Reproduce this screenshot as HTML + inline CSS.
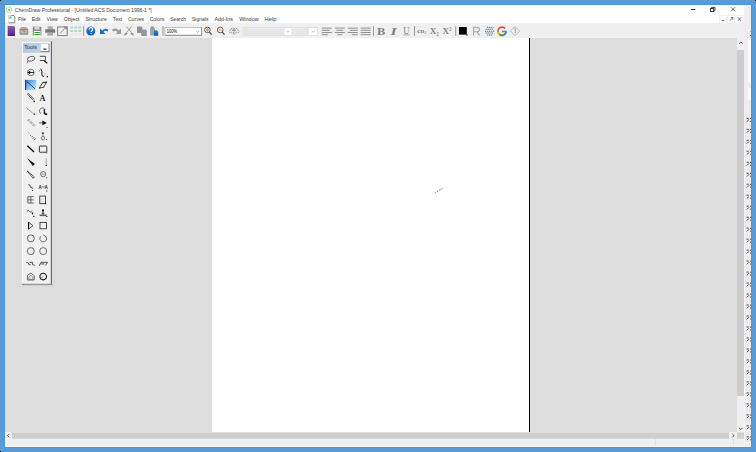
<!DOCTYPE html>
<html><head><meta charset="utf-8">
<style>
*{margin:0;padding:0;box-sizing:border-box}
html,body{width:756px;height:452px;overflow:hidden;background:#5b9bd5;font-family:"Liberation Sans",sans-serif}
.a{position:absolute}
#win{position:absolute;left:5px;top:5px;width:746px;height:442px;background:#f0f0f0;overflow:hidden}
#title{left:0;top:0;width:739px;height:9px;background:#fff}
#menu{left:0;top:9px;width:739px;height:9px;background:#fff}
#tb{left:0;top:18px;width:739px;height:15px;background:#f0f0f0}
#canvas{left:0;top:33px;width:732px;height:394px;background:#dddddd}
#page{left:207px;top:33px;width:317px;height:394px;background:#fff}
#pline{left:524px;top:33px;width:1px;height:394px;background:#000}
#vsb{left:732px;top:33px;width:7px;height:394px;background:#f0f0f0}
#hsb{left:0;top:427px;width:739px;height:7px;background:#f0f0f0}
#status{left:0;top:434px;width:739px;height:8px;background:#f0f0f0}
#rp{left:739px;top:0;width:7px;height:442px;background:#eeeeee}
svg{position:absolute;left:0;top:0}
text{font-family:"Liberation Sans",sans-serif}
</style></head><body>
<div id="win">
  <div id="title" class="a"></div>
  <div id="menu" class="a"></div>
  <div id="tb" class="a"></div>
  <div id="canvas" class="a"></div>
  <div id="page" class="a"></div>
  <div id="pline" class="a"></div>
  <div id="vsb" class="a"></div>
  <div id="hsb" class="a"></div>
  <div id="status" class="a"></div>
  <div id="rp" class="a"></div>
</div>
<svg width="756" height="452" viewBox="0 0 756 452">
<g stroke="#5cb85c" fill="none" stroke-width="0.9"><circle cx="9.1" cy="9.7" r="2.7" stroke-dasharray="1.2 0.6"/></g><circle cx="9.1" cy="9.9" r="1.1" fill="#7cc47c"/>
<text x="14.8" y="12.2" font-size="5.6" fill="#3a3a3a" font-weight="normal" textLength="137" lengthAdjust="spacingAndGlyphs" >ChemDraw Professional - [Untitled ACS Document 1996-1 *]</text>
<rect x="691" y="9" width="4.3" height="0.9" fill="#111"/>
<g fill="none" stroke="#111" stroke-width="0.8"><rect x="710.4" y="8.6" width="3.4" height="3"/><path d="M711.6 8.6V7.4h3.4v3h-1.2"/></g>
<g stroke="#333" stroke-width="0.7"><path d="M731 7.3L735 11.3M735 7.3L731 11.3"/></g>
<path d="M8.2 22.8V15.4h5.2" fill="#fff" stroke="#d0d0d0" stroke-width="0.7"/><path d="M11.4 15.4h2l1.4 1.4v6H8.6" fill="none" stroke="#6a6a6a" stroke-width="0.8"/>
<circle cx="10.2" cy="17.6" r="1.9" fill="#b6e0b0" opacity="0.9"/><circle cx="10.4" cy="17.2" r="0.7" fill="#6cc06c"/>
<text x="18" y="21.1" font-size="5.6" fill="#3a3a3a" font-weight="normal" textLength="8" lengthAdjust="spacingAndGlyphs" >File</text>
<text x="31.8" y="21.1" font-size="5.6" fill="#3a3a3a" font-weight="normal" textLength="8.7" lengthAdjust="spacingAndGlyphs" >Edit</text>
<text x="46.6" y="21.1" font-size="5.6" fill="#3a3a3a" font-weight="normal" textLength="11.3" lengthAdjust="spacingAndGlyphs" >View</text>
<text x="63.8" y="21.1" font-size="5.6" fill="#3a3a3a" font-weight="normal" textLength="15.6" lengthAdjust="spacingAndGlyphs" >Object</text>
<text x="85.6" y="21.1" font-size="5.6" fill="#3a3a3a" font-weight="normal" textLength="21.2" lengthAdjust="spacingAndGlyphs" >Structure</text>
<text x="112.8" y="21.1" font-size="5.6" fill="#3a3a3a" font-weight="normal" textLength="9.5" lengthAdjust="spacingAndGlyphs" >Text</text>
<text x="127.9" y="21.1" font-size="5.6" fill="#3a3a3a" font-weight="normal" textLength="16.2" lengthAdjust="spacingAndGlyphs" >Curves</text>
<text x="149.7" y="21.1" font-size="5.6" fill="#3a3a3a" font-weight="normal" textLength="14.7" lengthAdjust="spacingAndGlyphs" >Colors</text>
<text x="170.2" y="21.1" font-size="5.6" fill="#3a3a3a" font-weight="normal" textLength="15.8" lengthAdjust="spacingAndGlyphs" >Search</text>
<text x="192" y="21.1" font-size="5.6" fill="#3a3a3a" font-weight="normal" textLength="16.5" lengthAdjust="spacingAndGlyphs" >Signals</text>
<text x="214.4" y="21.1" font-size="5.6" fill="#3a3a3a" font-weight="normal" textLength="18.5" lengthAdjust="spacingAndGlyphs" >Add-Ins</text>
<text x="239.2" y="21.1" font-size="5.6" fill="#3a3a3a" font-weight="normal" textLength="19.5" lengthAdjust="spacingAndGlyphs" >Window</text>
<text x="264.6" y="21.1" font-size="5.6" fill="#3a3a3a" font-weight="normal" textLength="11.9" lengthAdjust="spacingAndGlyphs" >Help</text>
<rect x="719.5" y="15.3" width="7" height="7.9" fill="#fff" stroke="#e6e6e6" stroke-width="0.6"/>
<rect x="727.7" y="15.3" width="7" height="7.9" fill="#fff" stroke="#e6e6e6" stroke-width="0.6"/>
<rect x="736" y="15.3" width="7" height="7.9" fill="#fff" stroke="#e6e6e6" stroke-width="0.6"/>
<rect x="721.8" y="20" width="2.4" height="0.8" fill="#44556a"/>
<path d="M729.8 20.6l3-3M730.8 17.6h2v2" stroke="#44556a" stroke-width="0.8" fill="none"/>
<path d="M738 17.4l3 3.4M741 17.4l-3 3.4" stroke="#44556a" stroke-width="0.8" fill="none"/>
<defs><linearGradient id="gpur" x1="0" y1="0" x2="0" y2="1"><stop offset="0" stop-color="#8d5db0"/><stop offset="1" stop-color="#5a1c8c"/></linearGradient><linearGradient id="gsel" x1="0" y1="0" x2="1" y2="1"><stop offset="0" stop-color="#3e6fc8"/><stop offset="0.5" stop-color="#7fc0ec"/><stop offset="1" stop-color="#c4ecf8"/></linearGradient><linearGradient id="gtitle" x1="0" y1="0" x2="1" y2="0"><stop offset="0" stop-color="#b0c8e6"/><stop offset="1" stop-color="#c0d6ee"/></linearGradient><linearGradient id="gblue" x1="0" y1="0" x2="0" y2="1"><stop offset="0" stop-color="#2a8ad8"/><stop offset="1" stop-color="#0a58a8"/></linearGradient></defs>
<path d="M7.7 26h6.2l1.1 1.1V36H7.7z" fill="url(#gpur)"/><path d="M13.9 26v1.1H15z" fill="#ccc"/>
<rect x="19.5" y="28.2" width="8.8" height="6.6" rx="1.5" fill="#8a8a8a"/><rect x="20.6" y="27" width="6" height="2" rx="0.8" fill="#aaa"/><rect x="20.4" y="30" width="7" height="3.6" rx="0.6" fill="#b8b8b8"/><path d="M22 29.6l3.2 2.2" stroke="#f07020" stroke-width="1.4"/>
<path d="M32.8 26.8h8.6v8.8h-8.6z" fill="#8a8a8a"/><rect x="34.5" y="26.8" width="5" height="2.8" fill="#d6d6d6"/><rect x="34" y="31" width="6.4" height="4.6" fill="#fff"/><rect x="34.5" y="32" width="5.4" height="1" fill="#3a9a2a"/><rect x="34.5" y="34" width="5.4" height="1" fill="#3a9a2a"/>
<rect x="47.6" y="26.4" width="5.2" height="3" fill="#aaa"/><rect x="45.2" y="29.2" width="10" height="3.6" rx="0.6" fill="#7a7a7a"/><rect x="47.4" y="32.6" width="5.6" height="3" fill="#aaa"/>
<rect x="57.6" y="26.9" width="9.6" height="8.7" fill="none" stroke="#888" stroke-width="1.1"/><path d="M60.3 33L66.2 27.2" stroke="#888" stroke-width="1"/><path d="M63.5 26.6h3.7v3.7z" fill="#888"/>
<rect x="70.3" y="26.6" width="3" height="2" rx="0.5" fill="#a6dcf2"/>
<rect x="70.3" y="30.1" width="3" height="2" rx="0.5" fill="#b6dca6"/>
<rect x="70.3" y="33.6" width="3" height="2" rx="0.5" fill="#e2e8ee"/>
<rect x="74.3" y="26.6" width="3" height="2" rx="0.5" fill="#a6dcf2"/>
<rect x="74.3" y="30.1" width="3" height="2" rx="0.5" fill="#b6dca6"/>
<rect x="74.3" y="33.6" width="3" height="2" rx="0.5" fill="#e2e8ee"/>
<rect x="78.3" y="26.6" width="3" height="2" rx="0.5" fill="#a6dcf2"/>
<rect x="78.3" y="30.1" width="3" height="2" rx="0.5" fill="#b6dca6"/>
<rect x="78.3" y="33.6" width="3" height="2" rx="0.5" fill="#e2e8ee"/>
<rect x="83.3" y="26.2" width="0.8" height="9.6" fill="#808080"/>
<circle cx="90.8" cy="31" r="4.5" fill="url(#gblue)"/><path d="M89.1 29.6c0-1.2 0.8-1.9 1.8-1.9s1.8 0.6 1.8 1.6c0 1.3-1.5 1.4-1.5 2.6" fill="none" stroke="#fff" stroke-width="1.2"/><rect x="90.5" y="33" width="1.1" height="1.1" fill="#fff"/>
<path d="M102.2 32.2Q104.6 28.4 107.9 30.6" fill="none" stroke="#1a70c0" stroke-width="1.9"/><path d="M100 28.4V34h5.4z" fill="#1a70c0"/>
<path d="M118.8 32.2Q116.4 28.2 112.6 30.6" fill="none" stroke="#939ca3" stroke-width="2.2"/><path d="M121 28.4V34h-5.4z" fill="#939ca3"/>
<path d="M126.4 26.6l5.2 6M131.6 26.6l-5.2 6" stroke="#8f8f8f" stroke-width="0.9"/><ellipse cx="125.8" cy="34" rx="1.9" ry="1.1" fill="#959595" transform="rotate(-40 125.8 34)"/><ellipse cx="132.2" cy="34" rx="1.9" ry="1.1" fill="#959595" transform="rotate(40 132.2 34)"/>
<path d="M137 26.4h4.4l1 1v5.6H137z" fill="#929292"/><path d="M141.2 29.4h4.4l1.2 1.2v5.3h-5.6z" fill="#8e9aa2"/>
<rect x="150" y="27.4" width="4.8" height="8" rx="0.8" fill="#a3a3a3"/><rect x="151" y="26.5" width="2.6" height="1.6" fill="#8a8a8a"/><path d="M154 30.3h2.8l1.4 1.4v4h-4.2z" fill="url(#gblue)"/>
<rect x="162.6" y="26.2" width="0.8" height="9.6" fill="#808080"/>
<rect x="165" y="27.3" width="36.8" height="8.1" fill="#fff" stroke="#9a9a9a" stroke-width="0.6"/><rect x="165" y="34.8" width="36.8" height="0.7" fill="#777"/><rect x="201.3" y="27.3" width="0.6" height="8.2" fill="#777"/>
<text x="166.8" y="33.1" font-size="5.2" fill="#000" font-weight="normal" textLength="10.2" lengthAdjust="spacingAndGlyphs" >100%</text>
<path d="M196.5 31.2l1.2 1.1 1.2-1.1" fill="none" stroke="#555" stroke-width="0.6"/>
<circle cx="207.4" cy="29.9" r="2.8" fill="#fff" stroke="#5a5a5a" stroke-width="1"/><path d="M209.3 32l2.4 2.6" stroke="#555" stroke-width="1.3"/>
<rect x="205.8" y="29.55" width="3.2" height="0.9" fill="#f07020"/>
<rect x="206.95000000000002" y="28.4" width="0.9" height="3.2" fill="#f07020"/>
<circle cx="220.2" cy="29.9" r="2.8" fill="#fff" stroke="#5a5a5a" stroke-width="1"/><path d="M222.1 32l2.4 2.6" stroke="#555" stroke-width="1.3"/>
<rect x="218.6" y="29.55" width="3.2" height="0.9" fill="#f07020"/>
<path d="M230.2 32.8c-1.6-0.2-1.6-2.4 0.2-2.6 0.2-2 2.6-2.8 3.8-1.6 1.4-1 3.6-0.2 3.6 1.6 1.8 0.2 1.6 2.6-0.2 2.6z" fill="none" stroke="#7a7a7a" stroke-width="0.7" stroke-dasharray="1.2 0.5"/><ellipse cx="234" cy="30.2" rx="1.8" ry="1.3" fill="#a0a0a0"/><rect x="233.5" y="33" width="1" height="1.6" fill="#888"/>
<rect x="243" y="27.7" width="49" height="7.9" fill="#fff" stroke="#d2d2d2" stroke-width="0.6"/><rect x="243.5" y="28.2" width="41" height="6.9" fill="#e6e6e6"/><path d="M286.6 31l1.3 1.2 1.3-1.2" fill="none" stroke="#999" stroke-width="0.6"/>
<rect x="294" y="27.7" width="23.4" height="7.9" fill="#fff" stroke="#d2d2d2" stroke-width="0.6"/><rect x="294.5" y="28.2" width="14.6" height="6.9" fill="#e6e6e6"/><path d="M311.8 31l1.3 1.2 1.3-1.2" fill="none" stroke="#999" stroke-width="0.6"/>
<rect x="321.8" y="27.6" width="10" height="1" fill="#8f8f8f"/><rect x="321.8" y="29.8" width="8" height="1" fill="#8f8f8f"/><rect x="321.8" y="32.0" width="10" height="1" fill="#8f8f8f"/><rect x="321.8" y="34.2" width="6" height="1" fill="#8f8f8f"/>
<rect x="334.8" y="27.6" width="10" height="1" fill="#8f8f8f"/><rect x="336.3" y="29.8" width="7" height="1" fill="#8f8f8f"/><rect x="334.8" y="32.0" width="10" height="1" fill="#8f8f8f"/><rect x="337.3" y="34.2" width="5" height="1" fill="#8f8f8f"/>
<rect x="347.8" y="27.6" width="10" height="1" fill="#8f8f8f"/><rect x="349.8" y="29.8" width="8" height="1" fill="#8f8f8f"/><rect x="347.8" y="32.0" width="10" height="1" fill="#8f8f8f"/><rect x="351.8" y="34.2" width="6" height="1" fill="#8f8f8f"/>
<rect x="360.6" y="27.6" width="10" height="1" fill="#8f8f8f"/><rect x="360.6" y="29.8" width="10" height="1" fill="#8f8f8f"/><rect x="360.6" y="32.0" width="10" height="1" fill="#8f8f8f"/><rect x="360.6" y="34.2" width="10" height="1" fill="#8f8f8f"/>
<rect x="373" y="26.2" width="0.8" height="9.6" fill="#808080"/>
<text x="377" y="35" style="font-family:'Liberation Serif'" font-size="11.2" font-weight="bold" fill="#808080" textLength="8.2" lengthAdjust="spacingAndGlyphs">B</text>
<text x="390.4" y="35" style="font-family:'Liberation Serif'" font-size="11.2" font-style="italic" font-weight="bold" fill="#808080" textLength="6.2" lengthAdjust="spacingAndGlyphs">I</text>
<text x="403.3" y="34" style="font-family:'Liberation Serif'" font-size="10.4" fill="#808080" textLength="6.2" lengthAdjust="spacingAndGlyphs">U</text><rect x="403.6" y="34.5" width="5.8" height="0.8" fill="#999"/>
<rect x="414.2" y="26.2" width="0.8" height="9.6" fill="#808080"/>
<text x="417" y="33.4" style="font-family:'Liberation Serif'" font-size="5.6" font-weight="bold" fill="#8a8a8a" textLength="7.4" lengthAdjust="spacingAndGlyphs">cn</text><text x="424.6" y="33.6" style="font-family:'Liberation Serif'" font-size="4" font-weight="bold" fill="#9a9a9a">2</text>
<text x="429.8" y="34.2" style="font-family:'Liberation Serif'" font-size="8.6" font-weight="bold" fill="#8a8a8a" textLength="6.6" lengthAdjust="spacingAndGlyphs">X</text><text x="436.2" y="35.8" style="font-family:'Liberation Serif'" font-size="5.2" font-weight="bold" fill="#8f8f8f">2</text>
<text x="442.6" y="34.2" style="font-family:'Liberation Serif'" font-size="8.6" font-weight="bold" fill="#8a8a8a" textLength="6.6" lengthAdjust="spacingAndGlyphs">X</text><text x="449" y="30.8" style="font-family:'Liberation Serif'" font-size="5.2" font-weight="bold" fill="#8f8f8f">2</text>
<rect x="455.4" y="26.2" width="0.8" height="9.6" fill="#808080"/>
<rect x="459" y="27" width="7.8" height="7.6" fill="#000"/><rect x="466.4" y="34.4" width="1.2" height="1.2" fill="#000"/>
<path d="M473.6 35.4V27.2h3.2c1.6 0 2.6 1 2.6 2.3s-1 2.3-2.6 2.3h-3.2M476.8 31.8l2.8 3.6" fill="none" stroke="#ada197" stroke-width="1.05"/>
<circle cx="487.60" cy="27.40" r="0.75" fill="#7a95a8"/>
<circle cx="489.60" cy="27.40" r="0.75" fill="#5c7890"/>
<circle cx="491.60" cy="27.40" r="0.75" fill="#7a95a8"/>
<circle cx="486.20" cy="29.30" r="0.75" fill="#7a95a8"/>
<circle cx="488.20" cy="29.30" r="0.75" fill="#5c7890"/>
<circle cx="490.20" cy="29.30" r="0.75" fill="#7a95a8"/>
<circle cx="492.20" cy="29.30" r="0.75" fill="#5c7890"/>
<circle cx="485.60" cy="31.20" r="0.75" fill="#5c7890"/>
<circle cx="487.60" cy="31.20" r="0.75" fill="#7a95a8"/>
<circle cx="489.60" cy="31.20" r="0.75" fill="#5c7890"/>
<circle cx="491.60" cy="31.20" r="0.75" fill="#7a95a8"/>
<circle cx="493.60" cy="31.20" r="0.75" fill="#5c7890"/>
<circle cx="486.20" cy="33.10" r="0.75" fill="#7a95a8"/>
<circle cx="488.20" cy="33.10" r="0.75" fill="#5c7890"/>
<circle cx="490.20" cy="33.10" r="0.75" fill="#7a95a8"/>
<circle cx="492.20" cy="33.10" r="0.75" fill="#5c7890"/>
<circle cx="487.60" cy="35.00" r="0.75" fill="#7a95a8"/>
<circle cx="489.60" cy="35.00" r="0.75" fill="#5c7890"/>
<circle cx="491.60" cy="35.00" r="0.75" fill="#7a95a8"/>
<circle cx="493.6" cy="27.6" r="0.5" fill="#b8a070"/><circle cx="494.2" cy="33.8" r="0.5" fill="#b8a070"/>
<g fill="none" stroke-width="1.6"><path d="M505.2 28.6a4.1 4.1 0 1 0 0.9 3.2" stroke="#ea4335"/><path d="M498.1 31.8a4.1 4.1 0 0 0 1.2 2.7" stroke="#fbbc05"/><path d="M499.3 34.5a4.1 4.1 0 0 0 6.3-1.4" stroke="#34a853"/><path d="M502 31.5h4.3" stroke="#4285f4"/><path d="M506.2 31.2a4 4 0 0 1-0.8 2.4" stroke="#4285f4"/></g>
<path d="M515 26.4l4.6 4.6-4.6 4.6-4.6-4.6z" fill="none" stroke="#b8a8a8" stroke-width="0.8"/><path d="M514.3 29.3l1-0.9v4.8" fill="none" stroke="#8a8a8a" stroke-width="0.8"/>
<path d="M435.3 192.6L442.8 188.3" stroke="#555" stroke-width="0.8" stroke-dasharray="1.2 0.8"/>
<rect x="737" y="50" width="7" height="346" fill="#cdcdcd"/>
<path d="M739.2 43.6l1.6-1.6 1.6 1.6" fill="none" stroke="#333" stroke-width="0.9"/>
<path d="M739.2 428l1.6 1.6 1.6-1.6" fill="none" stroke="#333" stroke-width="0.9"/>
<rect x="12" y="432.5" width="717" height="6.2" fill="#cdcdcd"/>
<path d="M9.2 434.1l-1.6 1.6 1.6 1.6" fill="none" stroke="#333" stroke-width="0.9"/>
<path d="M732.4 434.1l1.6 1.6-1.6 1.6" fill="none" stroke="#333" stroke-width="0.9"/>
<rect x="737" y="432.5" width="7" height="6.2" fill="#cfcfcf"/>
<rect x="733" y="439" width="0.6" height="7" fill="#dadada"/><rect x="655.2" y="439" width="0.6" height="7" fill="#dadada"/>
<rect x="748" y="40" width="3" height="42.6" fill="#fff"/>
<rect x="748" y="88" width="3" height="11.8" fill="#fff"/>
<rect x="744" y="114" width="7" height="0.4" fill="#e0e0e0"/>
<rect x="744" y="114.1" width="7" height="0.4" fill="#e2e2e2"/>
<rect x="746.6" y="117.8" width="2" height="1.2" fill="#6a5030"/><rect x="747.4" y="118.8" width="1" height="0.6" fill="#d8b040"/><path d="M746.8 121.7l2.2-2.2" stroke="#2c3c80" stroke-width="0.9"/><rect x="748.6" y="119.0" width="1" height="1" fill="#90e0f0"/><rect x="750.1" y="117.89999999999999" width="0.9" height="1.2" fill="#554"/><rect x="750.1" y="120.7" width="0.9" height="1.2" fill="#554"/>
<rect x="744" y="125.08" width="7" height="0.4" fill="#e2e2e2"/>
<rect x="746.6" y="128.78" width="2" height="1.2" fill="#6a5030"/><rect x="747.4" y="129.78" width="1" height="0.6" fill="#d8b040"/><path d="M746.8 132.68l2.2-2.2" stroke="#2c3c80" stroke-width="0.9"/><rect x="748.6" y="129.98" width="1" height="1" fill="#90e0f0"/><rect x="750.1" y="128.88" width="0.9" height="1.2" fill="#554"/><rect x="750.1" y="131.68" width="0.9" height="1.2" fill="#554"/>
<rect x="744" y="136.06" width="7" height="0.4" fill="#e2e2e2"/>
<rect x="746.6" y="139.76" width="2" height="1.2" fill="#6a5030"/><rect x="747.4" y="140.76" width="1" height="0.6" fill="#d8b040"/><path d="M746.8 143.66l2.2-2.2" stroke="#2c3c80" stroke-width="0.9"/><rect x="748.6" y="140.95999999999998" width="1" height="1" fill="#90e0f0"/><rect x="750.1" y="139.85999999999999" width="0.9" height="1.2" fill="#554"/><rect x="750.1" y="142.66" width="0.9" height="1.2" fill="#554"/>
<rect x="744" y="147.04000000000002" width="7" height="0.4" fill="#e2e2e2"/>
<rect x="746.6" y="150.74" width="2" height="1.2" fill="#6a5030"/><rect x="747.4" y="151.74" width="1" height="0.6" fill="#d8b040"/><path d="M746.8 154.64000000000001l2.2-2.2" stroke="#2c3c80" stroke-width="0.9"/><rect x="748.6" y="151.94" width="1" height="1" fill="#90e0f0"/><rect x="750.1" y="150.84" width="0.9" height="1.2" fill="#554"/><rect x="750.1" y="153.64000000000001" width="0.9" height="1.2" fill="#554"/>
<rect x="744" y="158.02" width="7" height="0.4" fill="#e2e2e2"/>
<rect x="746.6" y="161.72" width="2" height="1.2" fill="#6a5030"/><rect x="747.4" y="162.72" width="1" height="0.6" fill="#d8b040"/><path d="M746.8 165.62l2.2-2.2" stroke="#2c3c80" stroke-width="0.9"/><rect x="748.6" y="162.92" width="1" height="1" fill="#90e0f0"/><rect x="750.1" y="161.82" width="0.9" height="1.2" fill="#554"/><rect x="750.1" y="164.62" width="0.9" height="1.2" fill="#554"/>
<rect x="744" y="169.0" width="7" height="0.4" fill="#e2e2e2"/>
<rect x="746.6" y="172.7" width="2" height="1.2" fill="#6a5030"/><rect x="747.4" y="173.7" width="1" height="0.6" fill="#d8b040"/><path d="M746.8 176.6l2.2-2.2" stroke="#2c3c80" stroke-width="0.9"/><rect x="748.6" y="173.89999999999998" width="1" height="1" fill="#90e0f0"/><rect x="750.1" y="172.79999999999998" width="0.9" height="1.2" fill="#554"/><rect x="750.1" y="175.6" width="0.9" height="1.2" fill="#554"/>
<rect x="744" y="179.98000000000002" width="7" height="0.4" fill="#e2e2e2"/>
<rect x="746.6" y="183.68" width="2" height="1.2" fill="#6a5030"/><rect x="747.4" y="184.68" width="1" height="0.6" fill="#d8b040"/><path d="M746.8 187.58l2.2-2.2" stroke="#2c3c80" stroke-width="0.9"/><rect x="748.6" y="184.88" width="1" height="1" fill="#90e0f0"/><rect x="750.1" y="183.78" width="0.9" height="1.2" fill="#554"/><rect x="750.1" y="186.58" width="0.9" height="1.2" fill="#554"/>
<rect x="744" y="190.96" width="7" height="0.4" fill="#e2e2e2"/>
<rect x="746.6" y="194.66" width="2" height="1.2" fill="#6a5030"/><rect x="747.4" y="195.66" width="1" height="0.6" fill="#d8b040"/><path d="M746.8 198.56l2.2-2.2" stroke="#2c3c80" stroke-width="0.9"/><rect x="748.6" y="195.85999999999999" width="1" height="1" fill="#90e0f0"/><rect x="750.1" y="194.76" width="0.9" height="1.2" fill="#554"/><rect x="750.1" y="197.56" width="0.9" height="1.2" fill="#554"/>
<rect x="744" y="201.94" width="7" height="0.4" fill="#e2e2e2"/>
<rect x="746.6" y="205.64" width="2" height="1.2" fill="#6a5030"/><rect x="747.4" y="206.64" width="1" height="0.6" fill="#d8b040"/><path d="M746.8 209.54l2.2-2.2" stroke="#2c3c80" stroke-width="0.9"/><rect x="748.6" y="206.83999999999997" width="1" height="1" fill="#90e0f0"/><rect x="750.1" y="205.73999999999998" width="0.9" height="1.2" fill="#554"/><rect x="750.1" y="208.54" width="0.9" height="1.2" fill="#554"/>
<rect x="744" y="212.92000000000002" width="7" height="0.4" fill="#e2e2e2"/>
<rect x="746.6" y="216.62" width="2" height="1.2" fill="#6a5030"/><rect x="747.4" y="217.62" width="1" height="0.6" fill="#d8b040"/><path d="M746.8 220.52l2.2-2.2" stroke="#2c3c80" stroke-width="0.9"/><rect x="748.6" y="217.82" width="1" height="1" fill="#90e0f0"/><rect x="750.1" y="216.72" width="0.9" height="1.2" fill="#554"/><rect x="750.1" y="219.52" width="0.9" height="1.2" fill="#554"/>
<rect x="744" y="223.90000000000003" width="7" height="0.4" fill="#e2e2e2"/>
<rect x="746.6" y="227.60000000000002" width="2" height="1.2" fill="#6a5030"/><rect x="747.4" y="228.60000000000002" width="1" height="0.6" fill="#d8b040"/><path d="M746.8 231.50000000000003l2.2-2.2" stroke="#2c3c80" stroke-width="0.9"/><rect x="748.6" y="228.8" width="1" height="1" fill="#90e0f0"/><rect x="750.1" y="227.70000000000002" width="0.9" height="1.2" fill="#554"/><rect x="750.1" y="230.50000000000003" width="0.9" height="1.2" fill="#554"/>
<rect x="744" y="234.88" width="7" height="0.4" fill="#e2e2e2"/>
<rect x="746.6" y="238.57999999999998" width="2" height="1.2" fill="#6a5030"/><rect x="747.4" y="239.57999999999998" width="1" height="0.6" fill="#d8b040"/><path d="M746.8 242.48l2.2-2.2" stroke="#2c3c80" stroke-width="0.9"/><rect x="748.6" y="239.77999999999997" width="1" height="1" fill="#90e0f0"/><rect x="750.1" y="238.67999999999998" width="0.9" height="1.2" fill="#554"/><rect x="750.1" y="241.48" width="0.9" height="1.2" fill="#554"/>
<rect x="744" y="245.86" width="7" height="0.4" fill="#e2e2e2"/>
<rect x="746.6" y="249.56" width="2" height="1.2" fill="#6a5030"/><rect x="747.4" y="250.56" width="1" height="0.6" fill="#d8b040"/><path d="M746.8 253.46l2.2-2.2" stroke="#2c3c80" stroke-width="0.9"/><rect x="748.6" y="250.76" width="1" height="1" fill="#90e0f0"/><rect x="750.1" y="249.66" width="0.9" height="1.2" fill="#554"/><rect x="750.1" y="252.46" width="0.9" height="1.2" fill="#554"/>
<rect x="744" y="256.84000000000003" width="7" height="0.4" fill="#e2e2e2"/>
<rect x="746.6" y="260.54" width="2" height="1.2" fill="#6a5030"/><rect x="747.4" y="261.54" width="1" height="0.6" fill="#d8b040"/><path d="M746.8 264.44l2.2-2.2" stroke="#2c3c80" stroke-width="0.9"/><rect x="748.6" y="261.74" width="1" height="1" fill="#90e0f0"/><rect x="750.1" y="260.64000000000004" width="0.9" height="1.2" fill="#554"/><rect x="750.1" y="263.44" width="0.9" height="1.2" fill="#554"/>
<rect x="744" y="267.82" width="7" height="0.4" fill="#e2e2e2"/>
<rect x="746.6" y="271.52" width="2" height="1.2" fill="#6a5030"/><rect x="747.4" y="272.52" width="1" height="0.6" fill="#d8b040"/><path d="M746.8 275.41999999999996l2.2-2.2" stroke="#2c3c80" stroke-width="0.9"/><rect x="748.6" y="272.71999999999997" width="1" height="1" fill="#90e0f0"/><rect x="750.1" y="271.62" width="0.9" height="1.2" fill="#554"/><rect x="750.1" y="274.41999999999996" width="0.9" height="1.2" fill="#554"/>
<rect x="744" y="278.8" width="7" height="0.4" fill="#e2e2e2"/>
<rect x="746.6" y="282.5" width="2" height="1.2" fill="#6a5030"/><rect x="747.4" y="283.5" width="1" height="0.6" fill="#d8b040"/><path d="M746.8 286.4l2.2-2.2" stroke="#2c3c80" stroke-width="0.9"/><rect x="748.6" y="283.7" width="1" height="1" fill="#90e0f0"/><rect x="750.1" y="282.6" width="0.9" height="1.2" fill="#554"/><rect x="750.1" y="285.4" width="0.9" height="1.2" fill="#554"/>
<rect x="744" y="289.78000000000003" width="7" height="0.4" fill="#e2e2e2"/>
<rect x="746.6" y="293.48" width="2" height="1.2" fill="#6a5030"/><rect x="747.4" y="294.48" width="1" height="0.6" fill="#d8b040"/><path d="M746.8 297.38l2.2-2.2" stroke="#2c3c80" stroke-width="0.9"/><rect x="748.6" y="294.68" width="1" height="1" fill="#90e0f0"/><rect x="750.1" y="293.58000000000004" width="0.9" height="1.2" fill="#554"/><rect x="750.1" y="296.38" width="0.9" height="1.2" fill="#554"/>
<rect x="744" y="300.76" width="7" height="0.4" fill="#e2e2e2"/>
<rect x="746.6" y="304.46" width="2" height="1.2" fill="#6a5030"/><rect x="747.4" y="305.46" width="1" height="0.6" fill="#d8b040"/><path d="M746.8 308.35999999999996l2.2-2.2" stroke="#2c3c80" stroke-width="0.9"/><rect x="748.6" y="305.65999999999997" width="1" height="1" fill="#90e0f0"/><rect x="750.1" y="304.56" width="0.9" height="1.2" fill="#554"/><rect x="750.1" y="307.35999999999996" width="0.9" height="1.2" fill="#554"/>
<rect x="744" y="311.74" width="7" height="0.4" fill="#e2e2e2"/>
<rect x="746.6" y="315.44" width="2" height="1.2" fill="#6a5030"/><rect x="747.4" y="316.44" width="1" height="0.6" fill="#d8b040"/><path d="M746.8 319.34l2.2-2.2" stroke="#2c3c80" stroke-width="0.9"/><rect x="748.6" y="316.64" width="1" height="1" fill="#90e0f0"/><rect x="750.1" y="315.54" width="0.9" height="1.2" fill="#554"/><rect x="750.1" y="318.34" width="0.9" height="1.2" fill="#554"/>
<rect x="744" y="322.72" width="7" height="0.4" fill="#e2e2e2"/>
<rect x="746.6" y="326.42" width="2" height="1.2" fill="#6a5030"/><rect x="747.4" y="327.42" width="1" height="0.6" fill="#d8b040"/><path d="M746.8 330.32l2.2-2.2" stroke="#2c3c80" stroke-width="0.9"/><rect x="748.6" y="327.62" width="1" height="1" fill="#90e0f0"/><rect x="750.1" y="326.52000000000004" width="0.9" height="1.2" fill="#554"/><rect x="750.1" y="329.32" width="0.9" height="1.2" fill="#554"/>
<rect x="744" y="333.70000000000005" width="7" height="0.4" fill="#e2e2e2"/>
<rect x="746.6" y="337.40000000000003" width="2" height="1.2" fill="#6a5030"/><rect x="747.4" y="338.40000000000003" width="1" height="0.6" fill="#d8b040"/><path d="M746.8 341.3l2.2-2.2" stroke="#2c3c80" stroke-width="0.9"/><rect x="748.6" y="338.6" width="1" height="1" fill="#90e0f0"/><rect x="750.1" y="337.50000000000006" width="0.9" height="1.2" fill="#554"/><rect x="750.1" y="340.3" width="0.9" height="1.2" fill="#554"/>
<rect x="744" y="344.68" width="7" height="0.4" fill="#e2e2e2"/>
<rect x="746.6" y="348.38" width="2" height="1.2" fill="#6a5030"/><rect x="747.4" y="349.38" width="1" height="0.6" fill="#d8b040"/><path d="M746.8 352.28l2.2-2.2" stroke="#2c3c80" stroke-width="0.9"/><rect x="748.6" y="349.58" width="1" height="1" fill="#90e0f0"/><rect x="750.1" y="348.48" width="0.9" height="1.2" fill="#554"/><rect x="750.1" y="351.28" width="0.9" height="1.2" fill="#554"/>
<rect x="744" y="355.66" width="7" height="0.4" fill="#e2e2e2"/>
<rect x="746.6" y="359.36" width="2" height="1.2" fill="#6a5030"/><rect x="747.4" y="360.36" width="1" height="0.6" fill="#d8b040"/><path d="M746.8 363.26l2.2-2.2" stroke="#2c3c80" stroke-width="0.9"/><rect x="748.6" y="360.56" width="1" height="1" fill="#90e0f0"/><rect x="750.1" y="359.46000000000004" width="0.9" height="1.2" fill="#554"/><rect x="750.1" y="362.26" width="0.9" height="1.2" fill="#554"/>
<rect x="744" y="366.64000000000004" width="7" height="0.4" fill="#e2e2e2"/>
<rect x="746.6" y="370.34000000000003" width="2" height="1.2" fill="#6a5030"/><rect x="747.4" y="371.34000000000003" width="1" height="0.6" fill="#d8b040"/><path d="M746.8 374.24l2.2-2.2" stroke="#2c3c80" stroke-width="0.9"/><rect x="748.6" y="371.54" width="1" height="1" fill="#90e0f0"/><rect x="750.1" y="370.44000000000005" width="0.9" height="1.2" fill="#554"/><rect x="750.1" y="373.24" width="0.9" height="1.2" fill="#554"/>
<rect x="744" y="377.62" width="7" height="0.4" fill="#e2e2e2"/>
<rect x="746.6" y="381.32" width="2" height="1.2" fill="#6a5030"/><rect x="747.4" y="382.32" width="1" height="0.6" fill="#d8b040"/><path d="M746.8 385.21999999999997l2.2-2.2" stroke="#2c3c80" stroke-width="0.9"/><rect x="748.6" y="382.52" width="1" height="1" fill="#90e0f0"/><rect x="750.1" y="381.42" width="0.9" height="1.2" fill="#554"/><rect x="750.1" y="384.21999999999997" width="0.9" height="1.2" fill="#554"/>
<rect x="744" y="388.6" width="7" height="0.4" fill="#e2e2e2"/>
<rect x="746.6" y="392.3" width="2" height="1.2" fill="#6a5030"/><rect x="747.4" y="393.3" width="1" height="0.6" fill="#d8b040"/><path d="M746.8 396.2l2.2-2.2" stroke="#2c3c80" stroke-width="0.9"/><rect x="748.6" y="393.5" width="1" height="1" fill="#90e0f0"/><rect x="750.1" y="392.40000000000003" width="0.9" height="1.2" fill="#554"/><rect x="750.1" y="395.2" width="0.9" height="1.2" fill="#554"/>
<rect x="744" y="399.58000000000004" width="7" height="0.4" fill="#e2e2e2"/>
<rect x="746.6" y="403.28000000000003" width="2" height="1.2" fill="#6a5030"/><rect x="747.4" y="404.28000000000003" width="1" height="0.6" fill="#d8b040"/><path d="M746.8 407.18l2.2-2.2" stroke="#2c3c80" stroke-width="0.9"/><rect x="748.6" y="404.48" width="1" height="1" fill="#90e0f0"/><rect x="750.1" y="403.38000000000005" width="0.9" height="1.2" fill="#554"/><rect x="750.1" y="406.18" width="0.9" height="1.2" fill="#554"/>
<rect x="744" y="410.56000000000006" width="7" height="0.4" fill="#e2e2e2"/>
<rect x="746.6" y="414.26000000000005" width="2" height="1.2" fill="#6a5030"/><rect x="747.4" y="415.26000000000005" width="1" height="0.6" fill="#d8b040"/><path d="M746.8 418.16l2.2-2.2" stroke="#2c3c80" stroke-width="0.9"/><rect x="748.6" y="415.46000000000004" width="1" height="1" fill="#90e0f0"/><rect x="750.1" y="414.36000000000007" width="0.9" height="1.2" fill="#554"/><rect x="750.1" y="417.16" width="0.9" height="1.2" fill="#554"/>
<rect x="744" y="421.54" width="7" height="0.4" fill="#e2e2e2"/>
<rect x="746.6" y="425.24" width="2" height="1.2" fill="#6a5030"/><rect x="747.4" y="426.24" width="1" height="0.6" fill="#d8b040"/><path d="M746.8 429.14l2.2-2.2" stroke="#2c3c80" stroke-width="0.9"/><rect x="748.6" y="426.44" width="1" height="1" fill="#90e0f0"/><rect x="750.1" y="425.34000000000003" width="0.9" height="1.2" fill="#554"/><rect x="750.1" y="428.14" width="0.9" height="1.2" fill="#554"/>
<rect x="744" y="432.52000000000004" width="7" height="0.4" fill="#e2e2e2"/>
<rect x="746.6" y="436.22" width="2" height="1.2" fill="#6a5030"/><rect x="747.4" y="437.22" width="1" height="0.6" fill="#d8b040"/><path d="M746.8 440.12l2.2-2.2" stroke="#2c3c80" stroke-width="0.9"/><rect x="748.6" y="437.42" width="1" height="1" fill="#90e0f0"/><rect x="750.1" y="436.32000000000005" width="0.9" height="1.2" fill="#554"/><rect x="750.1" y="439.12" width="0.9" height="1.2" fill="#554"/>
<rect x="750" y="31" width="1" height="0.5" fill="#777"/><rect x="750" y="35.2" width="1" height="0.7" fill="#333"/>
<rect x="22" y="42" width="29" height="242" fill="#f0f0f0"/>
<rect x="22" y="42" width="29" height="0.8" fill="#fff"/><rect x="22" y="42" width="0.8" height="242" fill="#fff"/>
<rect x="50.8" y="41.2" width="1.2" height="243.6" fill="#6a6a6a"/>
<rect x="22" y="283.8" width="30" height="1" fill="#7a7a7a"/>
<rect x="23" y="284.8" width="30" height="0.8" fill="#c4c4c4"/>
<rect x="23" y="43" width="27.3" height="9.8" fill="url(#gtitle)"/>
<text x="24.2" y="49.4" font-size="5.8" fill="#3a3020" font-weight="normal" textLength="12.7" lengthAdjust="spacingAndGlyphs" >Tools</text>
<rect x="40.8" y="44" width="8.4" height="7.7" fill="#fafafa"/><rect x="40.8" y="51.1" width="8.4" height="0.7" fill="#555"/><rect x="48.6" y="44" width="0.7" height="7.7" fill="#777"/><rect x="43.4" y="48.6" width="3" height="1" fill="#000"/>
<g transform="translate(30.8,59.7)"><ellipse cx="0.6" cy="-0.8" rx="3.8" ry="2.3" fill="none" stroke="#333" stroke-width="0.7" transform="rotate(-15)"/><path d="M-2.6 0.8l-1.2 2.8" stroke="#333" stroke-width="0.7"/></g>
<g transform="translate(43.2,59.7)"><path d="M-3.4-3.4h5.6v4.2M-3.4 0.8h5" fill="none" stroke="#222" stroke-width="0.8"/><path d="M1 1l3 2.6" stroke="#111" stroke-width="1.2"/></g>
<g transform="translate(30.8,72.46000000000001)"><circle cx="0" cy="0" r="3.3" fill="none" stroke="#444" stroke-width="0.7"/><path d="M-3.4 0L-0.6-1.8V1.8z" fill="#111"/><path d="M-1 0H3.2" stroke="#111" stroke-width="0.9"/></g>
<g transform="translate(43.2,72.46000000000001)"><path d="M-2.4-3.7L-1.4-1L-1.2 3.3L0.8 3.9" fill="none" stroke="#111" stroke-width="0.95"/><circle cx="-3.7" cy="-1.7" r="0.55" fill="#e03030"/><circle cx="-1.2" cy="0.4" r="0.6" fill="#e03030"/><circle cx="1.8" cy="1.4" r="0.55" fill="#e03030"/><circle cx="4.1" cy="4.3" r="0.75" fill="#000"/></g>
<g transform="translate(43.2,85.22)"><path d="M-3.8 2.8l3.2-5.4 4.2-0.8-3.2 5.4z" fill="none" stroke="#222" stroke-width="0.8"/><path d="M-3.8 2.8l0.6 1M0.2 1.8l0.6 1M-0.6-2.6l4.2 0" stroke="#222" stroke-width="0.7"/></g>
<g transform="translate(30.8,97.98)"><path d="M-3.6-3.8l6 6M-2.6-4.8l6 6" stroke="#444" stroke-width="0.7"/><path d="M-3.1-4.3l6 6" stroke="#444" stroke-width="0.9" stroke-dasharray="0.5 0.7"/><circle cx="3.4" cy="3.4" r="0.8" fill="#000"/></g>
<g transform="translate(43.2,97.98)"><text x="-3.6" y="3.4" style="font-family:'Liberation Serif'" font-size="8.2" font-weight="bold" fill="#222">A</text></g>
<g transform="translate(30.8,110.74000000000001)"><path d="M-4.2-2.6l7 5.6" stroke="#333" stroke-width="0.7" stroke-dasharray="1.6 0.9"/><circle cx="3.6" cy="3.4" r="0.7" fill="#111"/></g>
<g transform="translate(43.2,110.74000000000001)"><path d="M-2.2 3c-2-1.5-2.2-4.5 0.6-5.6 1.8-0.6 3.2 0.5 3.4 1.8" fill="none" stroke="#333" stroke-width="0.7"/><path d="M1 -1.6v4.6l1.8 1" stroke="#111" stroke-width="1"/><circle cx="3.2" cy="3.4" r="1" fill="#111"/></g>
<g transform="translate(30.8,123.5)"><path d="M-3.2-3.4l6.6 6.6M-2.2-4.4l6.6 6.6" stroke="#333" stroke-width="0.7" stroke-dasharray="1.4 0.8"/></g>
<g transform="translate(43.2,123.5)"><path d="M-4-0.6h3.6" stroke="#222" stroke-width="0.7"/><path d="M-0.8-3l4.4 2.4-4.4 2.4z" fill="#111"/><circle cx="3.8" cy="3.8" r="0.55" fill="#111"/></g>
<g transform="translate(30.8,136.26)"><path d="M-2.6-3.6l-0.3 0.3M-1.1-2.6l-0.6 0.6M0.4-1.4l-0.9 0.9M1.9-0.2l-1.2 1.2M3.4 1l-1.5 1.5M4.9 2.2l-1.8 1.8" stroke="#222" stroke-width="0.7"/></g>
<g transform="translate(43.2,136.26)"><path d="M-1.6-3.8h2.6l-0.8 1.6h-1z" fill="#222"/><ellipse cx="-0.2" cy="1.8" rx="1.5" ry="1.8" fill="none" stroke="#444" stroke-width="0.7"/><path d="M-0.2-2.2v2" stroke="#333" stroke-width="0.6"/><circle cx="3.4" cy="3.2" r="0.55" fill="#111"/></g>
<g transform="translate(30.8,149.01999999999998)"><path d="M-3.4-3.2L3.2 3" stroke="#111" stroke-width="1.4"/></g>
<g transform="translate(43.2,149.01999999999998)"><rect x="-3.8" y="-3.0" width="7.4" height="6.2" rx="0.6" fill="none" stroke="#222" stroke-width="0.9"/><circle cx="3.6" cy="3.8" r="0.55" fill="#111"/></g>
<g transform="translate(30.8,161.78)"><path d="M-3.6-3.6L4.1 2.2 2 4.3z" fill="#111"/></g>
<g transform="translate(43.2,161.78)"><path d="M3-3.8v6.8" stroke="#777" stroke-width="0.6"/><circle cx="3.1" cy="3.6" r="0.7" fill="#111"/></g>
<g transform="translate(30.8,174.54000000000002)"><path d="M-3.6-3.6L3.6 2.4 2.4 3.8z" fill="none" stroke="#222" stroke-width="0.7"/></g>
<g transform="translate(43.2,174.54000000000002)"><circle cx="0" cy="-0.4" r="2.6" fill="none" stroke="#444" stroke-width="0.7"/><path d="M-1.6-0.4h3.2" stroke="#555" stroke-width="0.6"/><circle cx="3.6" cy="3.2" r="0.55" fill="#111"/></g>
<g transform="translate(30.8,187.3)"><path d="M-2.6-2.8h1.2v1.4h1.4v1.6h1.4v1.6" fill="none" stroke="#333" stroke-width="0.7"/><circle cx="1.8" cy="3.2" r="0.6" fill="#111"/></g>
<g transform="translate(43.2,187.3)"><text x="-4.6" y="1.4" font-size="4.6" font-weight="bold" fill="#222">A</text><path d="M-1.2-0.4h2.6" stroke="#222" stroke-width="0.6"/><text x="1.2" y="1.4" font-size="4.6" font-weight="bold" fill="#222">A</text><circle cx="3.6" cy="3.6" r="0.55" fill="#111"/></g>
<g transform="translate(30.8,200.06)"><path d="M-3-3.4v6.4h6M-3-0.2h6M0-3.4v6.4M-3-3.4h6" fill="none" stroke="#333" stroke-width="0.7"/></g>
<g transform="translate(43.2,200.06)"><rect x="-3.4" y="-4" width="5.6" height="7.6" fill="none" stroke="#222" stroke-width="0.8"/><circle cx="-1.4" cy="-0.8" r="0.4" fill="#aaa"/><circle cx="0.6" cy="-0.8" r="0.4" fill="#aaa"/><circle cx="-1.4" cy="1.4" r="0.4" fill="#aaa"/><circle cx="0.6" cy="1.4" r="0.4" fill="#aaa"/><circle cx="2.6" cy="3.6" r="0.55" fill="#111"/></g>
<g transform="translate(30.8,212.82)"><path d="M-3.8-1.2c0.8-1.6 1.8-1.6 2.4-0.4s1.6 1.2 2.6-0.6" fill="none" stroke="#333" stroke-width="0.7"/><path d="M0.6-0.2h2l-1 2.4z" fill="#111"/><circle cx="3" cy="3.6" r="0.65" fill="#111"/></g>
<g transform="translate(43.2,212.82)"><path d="M-3.2 1.4v1.4h6v-1.4" fill="none" stroke="#222" stroke-width="0.8"/><circle cx="-0.2" cy="-2.4" r="1.1" fill="#111"/><path d="M-0.2-2v3.2M-1.8 1.2h3.2" stroke="#111" stroke-width="0.9"/><circle cx="3.6" cy="3.6" r="0.65" fill="#111"/></g>
<g transform="translate(30.8,225.57999999999998)"><path d="M-2.2-3.4v7l4.4-3.5z" fill="none" stroke="#222" stroke-width="0.75"/><path d="M-2.2-3.4v7" stroke="#111" stroke-width="1.1"/></g>
<g transform="translate(43.2,225.57999999999998)"><rect x="-3.2" y="-3.2" width="6.4" height="6.4" fill="none" stroke="#222" stroke-width="0.8"/></g>
<g transform="translate(30.8,238.33999999999997)"><circle r="3.5" fill="none" stroke="#333" stroke-width="0.7"/></g>
<g transform="translate(43.2,238.33999999999997)"><path d="M0-3.5L2.9-1.7 3.4 1.6 1.3 3.5-1.6 3.3-3.4 1-2.8-2.1" fill="none" stroke="#333" stroke-width="0.7"/></g>
<g transform="translate(30.8,251.10000000000002)"><circle r="3.5" fill="none" stroke="#333" stroke-width="0.7"/></g>
<g transform="translate(43.2,251.10000000000002)"><circle r="3.5" fill="none" stroke="#333" stroke-width="0.7"/></g>
<g transform="translate(30.8,263.86)"><path d="M-4.6-1.5L-2.6-1.1L-1.8 0.9L-0.2 0.9M-1.2-1.3L1.6-1.7L2 1.1L4 1.3" fill="none" stroke="#333" stroke-width="0.8"/></g>
<g transform="translate(43.2,263.86)"><path d="M-3.6 1.2L-2.2-1.5H4.4L2.2 1.7M-2.4 0.1H1.3" fill="none" stroke="#333" stroke-width="0.8"/><circle cx="-3.8" cy="1.4" r="0.5" fill="#222"/></g>
<g transform="translate(30.8,276.62)"><path d="M0-3.6l3.4 2.6v4.4h-6.8v-4.4z" fill="none" stroke="#333" stroke-width="0.7"/><path d="M-2 0.6l2-2 2 2v2h-4z" fill="none" stroke="#333" stroke-width="0.5"/></g>
<g transform="translate(43.2,276.62)"><circle r="3.3" fill="none" stroke="#111" stroke-width="1.1"/><path d="M-1.6 1.4l1.2-1.6" stroke="#333" stroke-width="0.6"/></g>
<rect x="25.1" y="79.9" width="11.1" height="10.1" fill="url(#gsel)"/><rect x="25.1" y="79.9" width="1" height="10.1" fill="#1a2a8a"/><path d="M26.8 81.4L35 88.8" stroke="#223" stroke-width="0.8"/>
<rect x="0" y="0" width="1" height="1" fill="#000"/><rect x="755" y="0" width="1" height="1" fill="#000"/><rect x="0" y="451" width="1" height="1" fill="#000"/>
<rect x="4.5" y="4.5" width="747" height="443" fill="none" stroke="#4d8fd0" stroke-width="1" opacity="0.6"/>
<rect x="5" y="446" width="739" height="1" fill="#f8f4ee"/>
<rect x="744" y="112" width="0.8" height="335" fill="#f6f6f6"/>
</svg>
</body></html>
